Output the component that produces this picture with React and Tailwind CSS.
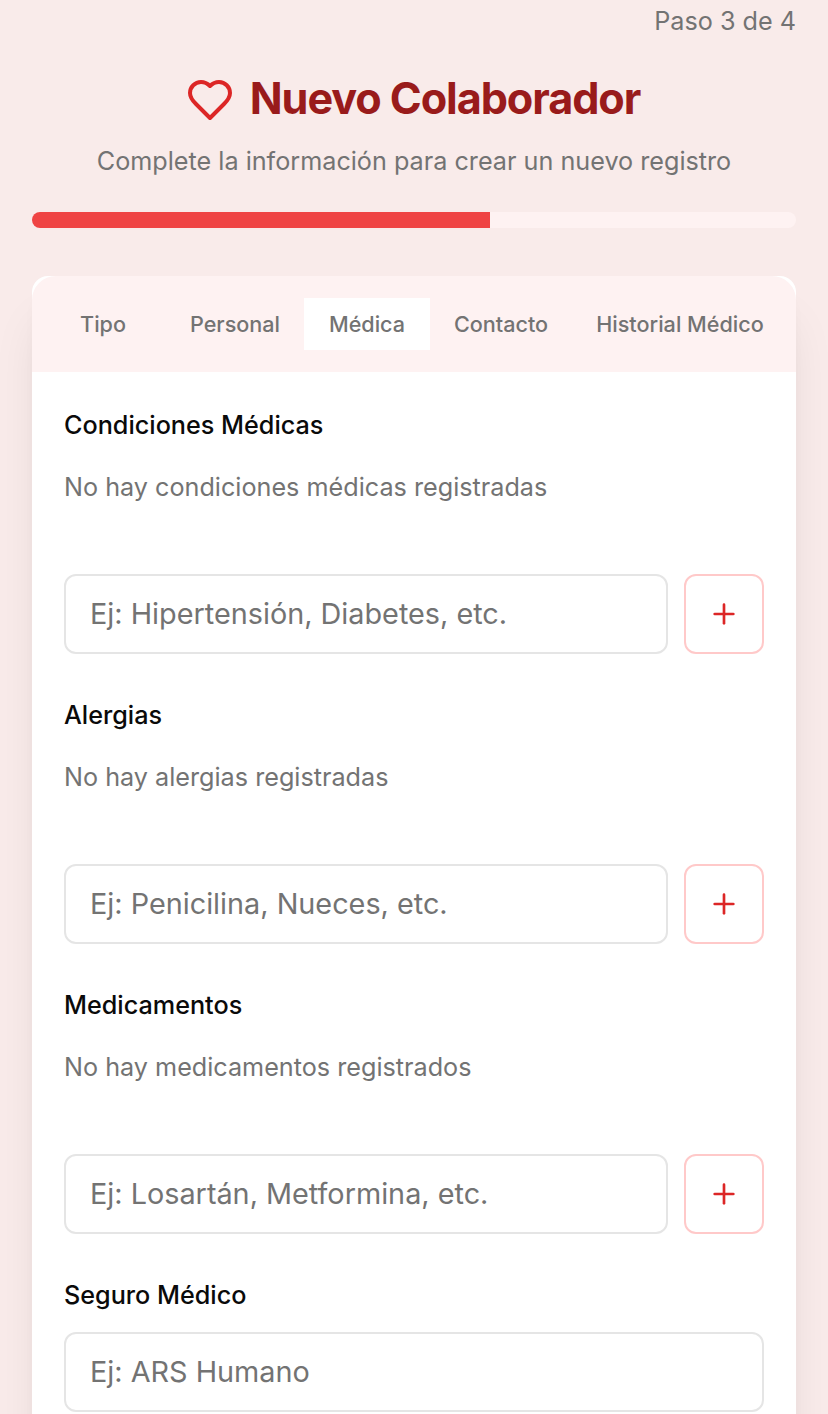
import { Plus } from "lucide-react";

const tabs = [
  { label: "Tipo", width: "w-[126px]" },
  { label: "Personal", width: "w-[138px]" },
  { label: "Médica", width: "w-[126px]", active: true },
  { label: "Contacto", width: "w-[142px]" },
  { label: "Historial Médico", width: "w-[216px]" },
];

const sections = [
  { title: "Condiciones Médicas", empty: "No hay condiciones médicas registradas", hint: "Ej: Hipertensión, Diabetes, etc." },
  { title: "Alergias", empty: "No hay alergias registradas", hint: "Ej: Penicilina, Nueces, etc." },
  { title: "Medicamentos", empty: "No hay medicamentos registrados", hint: "Ej: Losartán, Metformina, etc." },
];

function Field({ hint }) {
  return (
    <input
      placeholder={hint}
      className="h-20 w-full min-w-0 flex-1 rounded-xl border-2 border-[#e5e5e5] bg-white px-6 pb-[2px] text-[28.8px] text-[#0a0a0a] placeholder:text-[#737373]"
    />
  );
}

function Section({ title, empty, hint }) {
  return (
    <section className="mb-10 h-[250px]">
      <h2 className="h-[42px] text-[25.2px] leading-[42px] font-medium text-[#0a0a0a]">{title}</h2>
      <p className="mt-5 h-[42px] text-[25.2px] leading-[42px] text-[#737373]">{empty}</p>
      <div className="mt-[66px] flex gap-4">
        <Field hint={hint} />
        <button aria-label="Agregar" className="flex size-20 items-center justify-center rounded-xl border-2 border-[#ffc9c9] bg-white text-[#dc2626]">
          <Plus size={32} strokeWidth={2} />
        </button>
      </div>
    </section>
  );
}

export default function App() {
  return (
    <div className="h-[1414px] w-[828px] overflow-hidden bg-[#f9ebea] px-8 font-['Inter',sans-serif]">
      <div className="flex h-[42px] justify-end text-[25.2px] leading-[42px] text-[#737373]">Paso 3 de 4</div>
      <header className="flex flex-col items-center pt-[34px]">
        <h1 className="flex h-12 items-center gap-4 pr-[2px] text-[43.2px] leading-[44px] font-bold tracking-[-1.08px] text-[#991b1b]">
          <svg className="size-12 text-[#dc2626]" viewBox="0 0 24 24" fill="none" stroke="currentColor" strokeWidth="2" strokeLinecap="round" strokeLinejoin="round">
            <path d="M19 14c1.49-1.46 3-3.21 3-5.5A5.5 5.5 0 0 0 16.5 3c-1.76 0-3 .5-4.5 2-1.5-1.5-2.74-2-4.5-2A5.5 5.5 0 0 0 2 8.5c0 2.3 1.5 4.05 3 5.5l7 7Z" />
          </svg>
          <span className="pb-1">Nuevo Colaborador</span>
        </h1>
        <p className="mt-4 h-[42px] text-[25.2px] leading-[42px] whitespace-nowrap text-[#737373]">
          Complete la información para crear un nuevo registro
        </p>
      </header>
      <div className="mt-[30px] h-4 overflow-hidden rounded-lg bg-[#fef2f2]">
        <div className="h-full w-[60%] bg-[#ef4444]" />
      </div>
      <main className="mt-12 h-[1400px] rounded-[16px] bg-white shadow-[0_40px_50px_-10px_rgba(0,0,0,0.1),0_16px_20px_-12px_rgba(0,0,0,0.1)]">
        <nav className="flex h-24 items-center rounded-t-[24px] bg-[#fef2f2] pl-2">
          {tabs.map((t) => (
            <button
              key={t.label}
              className={`h-[52px] shrink-0 text-center text-[21.6px] font-medium whitespace-nowrap text-[#737373] ${t.width} ${t.active ? "bg-white" : ""}`}
            >
              {t.label}
            </button>
          ))}
        </nav>
        <div className="px-8 pt-8">
          {sections.map((s) => (
            <Section key={s.title} {...s} />
          ))}
          <h2 className="h-[42px] text-[25.2px] leading-[42px] font-medium text-[#0a0a0a]">Seguro Médico</h2>
          <div className="mt-4 flex">
            <Field hint="Ej: ARS Humano" />
          </div>
        </div>
      </main>
    </div>
  );
}
